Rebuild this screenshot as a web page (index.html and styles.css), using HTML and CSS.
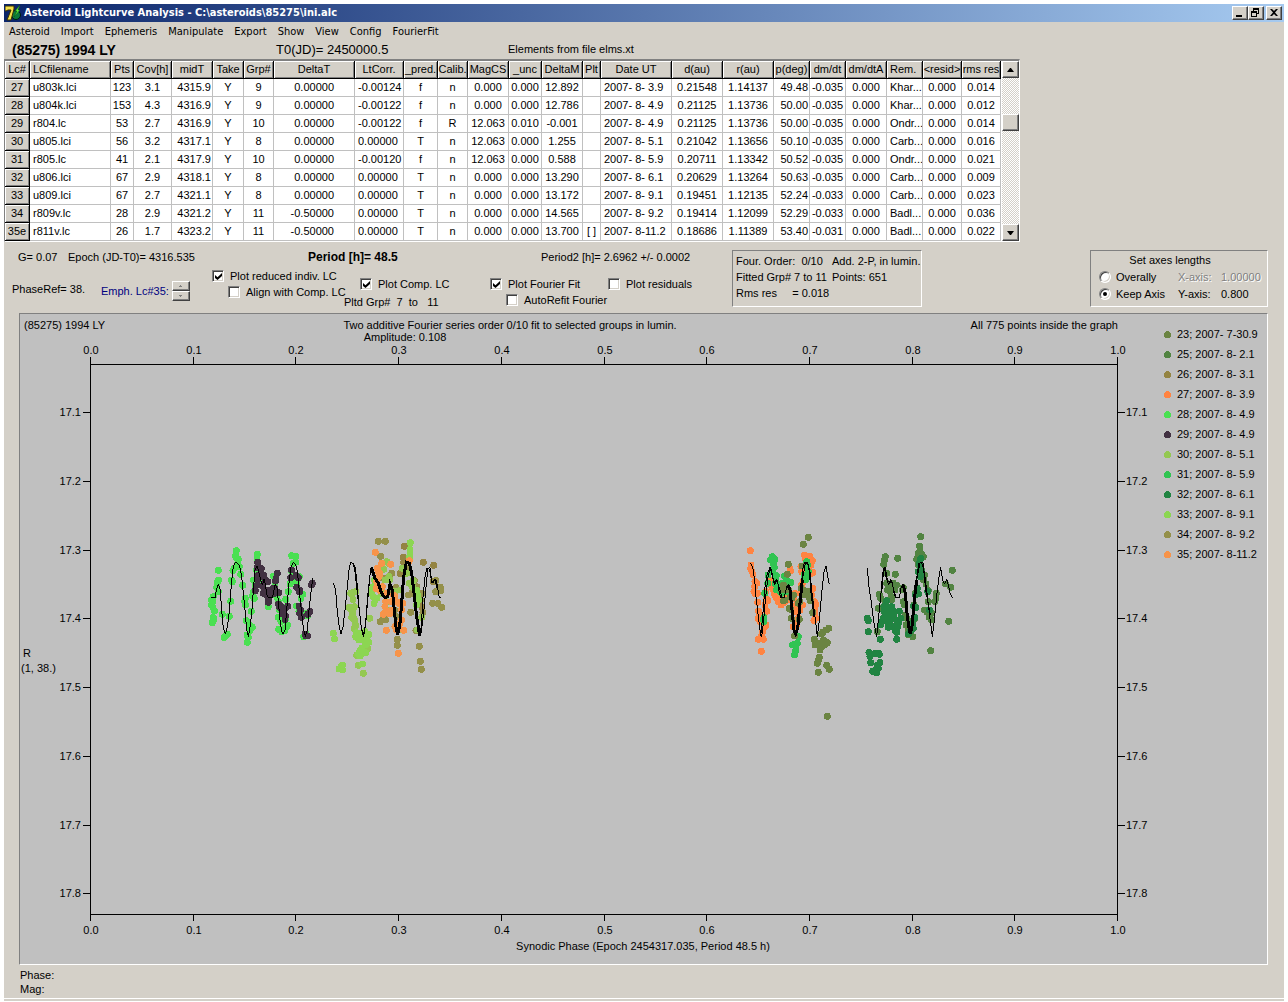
FILE: index.html
```html
<!DOCTYPE html>
<html lang="en">
<head>
    <meta charset="UTF-8">
    <meta name="viewport" content="width=device-width, initial-scale=1.0">
    <title>Asteroid Lightcurve Analysis</title>
    <link rel="stylesheet" href="styles.css">
</head>
<body>
    <div class="window">
        <header class="titlebar">
            <svg class="app-icon" width="16" height="16" viewBox="0 0 16 16">
                <circle cx="11" cy="10" r="4.5" fill="#0a7a3c" stroke="#001a10"/>
                <path d="M0 1h9v3L6 15H2L6 5H3L1 6H0z" fill="#f4e04a" stroke="#3a3000"/>
                <path d="M15 0l-5 6h2l-3 6 6-7h-2z" fill="#5af03c" stroke="#0a4a10" stroke-width=".5"/>
            </svg>
            <h1>Asteroid Lightcurve Analysis - C:\asteroids\85275\ini.alc</h1>
            <div class="window-buttons">
                <button type="button" aria-label="Minimize"><svg width="12" height="10" viewBox="0 0 12 10"><path d="M2 7h6v2H2z"/></svg></button>
                <button type="button" aria-label="Restore"><svg width="12" height="10" viewBox="0 0 12 10"><path d="M3 0h6v6H7V5h1V2H4v1H3zM1 3h6v6H1zM2 5v3h4V5z" fill-rule="evenodd"/></svg></button>
                <button type="button" aria-label="Close"><svg width="12" height="10" viewBox="0 0 12 10"><path d="M2 1h2l2 2 2-2h2L7 4.500l3 3.500H8L6 6 4 8H2l3-3.500z"/></svg></button>
            </div>
        </header>

        <nav class="menu">
            <a href="#">Asteroid</a>
            <a href="#">Import</a>
            <a href="#">Ephemeris</a>
            <a href="#">Manipulate</a>
            <a href="#">Export</a>
            <a href="#">Show</a>
            <a href="#">View</a>
            <a href="#">Config</a>
            <a href="#">FourierFit</a>
        </nav>

        <div class="object-line">
            <strong>(85275) 1994 LY</strong>
            <span class="t0">T0(JD)= 2450000.5</span>
            <span>Elements from file elms.xt</span>
        </div>

        <div class="grid-frame">
            <table>
                <colgroup id="columns"></colgroup>
                <thead>
                    <tr id="headings"></tr>
                </thead>
                <tbody id="rows">
                    <!-- Rows are filled in by script.js -->
                </tbody>
            </table>
            <div class="scrollbar">
                <button type="button" aria-label="Scroll up"><svg width="7" height="4" viewBox="0 0 7 4"><path d="M3 0h1l3 4H0z"/></svg></button>
                <div class="thumb"></div>
                <button type="button" aria-label="Scroll down"><svg width="7" height="4" viewBox="0 0 7 4"><path d="M0 0h7L4 4H3z"/></svg></button>
            </div>
        </div>

        <div class="controls">
            <div class="settings">
                <div class="values">
                    <span>G= 0.07</span>
                    <span>Epoch (JD-T0)= 4316.535</span>
                    <strong>Period [h]= 48.5</strong>
                    <span>Period2 [h]= 2.6962 +/- 0.0002</span>
                </div>
                <div class="options">
                    <div class="phase-ref">PhaseRef= 38.</div>
                    <div class="emph">
                        <span>Emph. Lc#35:</span>
                        <div class="spin">
                            <button type="button" aria-label="Next"><svg width="3" height="2" viewBox="0 0 3 2"><path d="M1 0h1v1h1v1H0V1h1z"/></svg></button>
                            <button type="button" aria-label="Previous"><svg width="3" height="2" viewBox="0 0 3 2"><path d="M0 0h3v1H2v1H1V1H0z"/></svg></button>
                        </div>
                    </div>
                    <div>
                        <label><input type="checkbox" checked> Plot reduced indiv. LC</label>
                        <label class="indent"><input type="checkbox"> Align with Comp. LC</label>
                    </div>
                    <div class="lower">
                        <label class="indent"><input type="checkbox" checked> Plot Comp. LC</label>
                        <div class="groups">Pltd Grp#&nbsp; 7 &nbsp;to &nbsp; 11</div>
                    </div>
                    <div class="lower">
                        <label><input type="checkbox" checked> Plot Fourier Fit</label>
                        <label class="indent"><input type="checkbox"> AutoRefit Fourier</label>
                    </div>
                    <div class="lower">
                        <label><input type="checkbox"> Plot residuals</label>
                    </div>
                </div>
            </div>

            <div class="panel fit-info">
                <span>Four. Order:&nbsp; 0/10</span><span>Add. 2-P, in lumin.</span>
                <span>Fitted Grp# 7 to 11</span><span>Points: 651</span>
                <span>Rms res &nbsp; &nbsp; = 0.018</span>
            </div>

            <div class="panel axes">
                <div class="axes-title">Set axes lengths</div>
                <label><input type="radio" name="axes"> Overally</label>
                <span class="disabled">X-axis:</span><span class="disabled">1.00000</span>
                <label><input type="radio" name="axes" checked> Keep Axis</label>
                <span>Y-axis:</span><span>0.800</span>
            </div>
        </div>

        <div class="panel chart">
            <svg viewBox="0 0 1247 650">
                <text x="4" y="15">(85275) 1994 LY</text>
                <text x="490" y="15" class="middle">Two additive Fourier series order 0/10 fit to selected groups in lumin.</text>
                <text x="385" y="27" class="middle">Amplitude: 0.108</text>
                <text x="1098" y="15" class="end">All 775 points inside the graph</text>
                <text x="3" y="343">R</text>
                <text x="1" y="358">(1, 38.)</text>
                <text x="623" y="636" class="middle">Synodic Phase (Epoch 2454317.035, Period 48.5 h)</text>

                <path class="axis" d="M70.500 43V607M1097.500 43V607M70 50.500H1098M70 600.500H1098"/>
                <g id="ticks"></g>
                <g id="legend"></g>

                <!-- phase 0.1 - 0.35, three units per pixel -->
                <g transform="translate(175 216) scale(.33333)">
                    <g id="left-points"></g>
                    <path class="fit" d="M48 203L60 203L64 180L70 162L75 175L80 240L85 295L91 313L95 300L101 265L107 190L113 120L118 100L123 97L130 101L135 113L140 140L145 190L150 240L155 300L160 320L164 300L170 250L175 180L180 120L187 107L192 130L197 150L202 165L207 148L212 165L214 190L220 203L232 203L236 185L241 162L246 175L250 215L255 270L260 305L264 313L270 300L276 230L282 160L288 110L295 97L302 103L307 125L311 165L320 250L326 300L331 320L337 300L343 230L350 170L353 145"/>
                    <path class="fit" d="M415 160L422 180L426 235L432 285L438 312L444 290L450 240L457 170L463 110L468 97L475 103L480 125L486 180L494 250L500 300L506 320L513 270L520 190L526 125L531 110"/>
                    <path class="fit" d="M474 99L480 112L485 145L491 220L498 285L504 316L511 290L518 200L526 125"/>
                    <path class="fit thick" d="M529 112L540 145L550 160L560 190L570 203L578 200L585 162L592 180L598 240L603 290L608 313L614 290L620 220L626 140L634 97L643 100L650 130L656 180L665 260L674 318"/>
                    <path class="fit" d="M672 318L679 290L684 200L690 140L696 115L706 113L710 160L718 150L724 150L730 185L733 203L738 203"/>
                    <path class="fit" d="M677 318L686 250L692 180L699 115L704 120L708 145L713 160L720 150L726 175"/>
                </g>

                <!-- phase 0.64 - 0.84 -->
                <g transform="translate(720 216) scale(.33333)">
                    <g id="right-points"></g>
                    <path class="fit" d="M31 98L38 110L44 150L48 200L55 260L60 300L65 320L70 280L77 200L84 140L92 112L97 135L103 165L109 148L115 165L118 190L123 203L133 203L140 170L146 162L152 180L158 250L163 300L167 313L173 295L180 220L188 120L193 97L203 98L210 125L216 190L225 260L232 320L238 270L246 180L252 125L258 108L263 140L268 163"/>
                    <path class="fit" d="M62 318L68 260L75 170L82 130L90 112L100 150L106 162L111 150L118 175L126 200"/>
                    <path class="fit thick" d="M144 165L150 180L156 240L162 300L167 311L173 295L180 220L187 150"/>
                    <path class="fit" d="M187 150L196 99L204 104L208 125L213 190L222 260"/>
                    <path class="fit" d="M382 115L387 170L395 225L402 280L410 320L415 270L422 200L428 130L433 110L438 140L446 165L452 148L458 165L462 190L468 203L478 203L484 170L490 162L496 190L502 260L508 300L511 313L516 290L523 210L532 130L537 100L545 97L553 125L560 180L568 250L577 320L583 270L591 190L597 140L602 112L608 150L613 163L620 148L625 165L630 190L637 203"/>
                    <path class="fit" d="M425 190L431 115L436 112L442 150L449 160L455 150L461 180L467 200"/>
                    <path class="fit thick" d="M490 165L496 190L502 260L508 300L511 311L516 290L523 210L530 150"/>
                    <path class="fit" d="M530 150L540 99L549 99L557 180L571 255"/>
                </g>
            </svg>
        </div>

        <footer class="readout">
            <div>Phase:</div>
            <div>Mag:</div>
        </footer>
    </div>

    <script src="script.js"></script>
</body>
</html>
```

FILE: styles.css
```css
:root {
    --face: #d4d0c8;
    --shadow: #808080;
    --dark: #404040;
    --light: #ffffff;
    --chart: #c0c0c0;
}

* {
    box-sizing: border-box;
}

body {
    margin: 4px 4px 0;
    background-color: #fff;
    color: #000;
    font-family: "Liberation Sans", Arial, sans-serif;
    font-size: 11px;
    line-height: 16px;
}

.window {
    background-color: var(--face);
    border-bottom: 2px solid var(--face);
    white-space: nowrap;
}

button {
    display: flex;
    align-items: center;
    justify-content: center;
    padding: 0;
    background-color: var(--face);
    border: 1px solid;
    border-color: var(--light) var(--dark) var(--dark) var(--light);
    box-shadow: inset -1px -1px var(--shadow);
}

/* Title bar and menu */
.titlebar {
    display: flex;
    align-items: center;
    height: 18px;
    padding: 0 2px 0 1px;
    background: linear-gradient(to right, #0a246a, #a6caf0);
    color: #fff;
}

.titlebar h1 {
    flex: 1;
    margin: 0 0 0 3px;
    font-family: "DejaVu Sans Condensed", Tahoma, sans-serif;
    font-size: 11px;
    font-weight: bold;
}

.window-buttons {
    display: flex;
}

.window-buttons button {
    width: 16px;
    height: 14px;
}

.window-buttons button:last-child {
    margin-left: 2px;
}

.menu {
    display: flex;
    gap: 11px;
    height: 19px;
    padding: 2px 5px 0;
    font-family: "DejaVu Sans Condensed", Tahoma, sans-serif;
}

.menu a {
    color: #000;
    text-decoration: none;
}

.object-line {
    display: grid;
    grid-template-columns: 264px 232px 1fr;
    height: 18px;
    padding-left: 8px;
}

.object-line strong,
.object-line .t0 {
    font-size: 14px;
    line-height: 18px;
}

.object-line .t0 {
    font-size: 13px;
}

/* Lightcurve table */
.grid-frame {
    display: flex;
    width: fit-content;
    border: 1px solid;
    border-width: 2px 1px 1px;
    border-color: var(--shadow) var(--light) var(--light) var(--shadow);
    background-color: #fff;
}

table {
    width: 996px;
    table-layout: fixed;
    border-collapse: separate;
    border-spacing: 0;
}

th,
td {
    height: 18px;
    padding: 0;
    overflow: hidden;
    border: 1px solid var(--chart);
    border-width: 0 1px 1px 0;
    font-weight: normal;
    line-height: 17px;
    text-align: center;
}

th {
    background-color: var(--face);
    border-color: #000;
    box-shadow: inset 1px 1px var(--light), inset -1px -1px var(--shadow);
}

.left {
    padding-left: 3px;
    text-align: left;
}

td.right {
    padding-right: 1px;
    text-align: right;
}

td.delta {
    padding-right: 20px;
    text-align: right;
}

.scrollbar {
    display: flex;
    flex-direction: column;
    width: 17px;
    margin-left: 1px;
    background: repeating-conic-gradient(#fff 0 25%, var(--face) 0 50%) 0 0 / 2px 2px;
}

.scrollbar button {
    height: 17px;
}

.thumb {
    height: 17px;
    margin: 36px 0 auto;
    background-color: var(--face);
    border: 1px solid;
    border-color: var(--light) var(--dark) var(--dark) var(--light);
    box-shadow: inset -1px -1px var(--shadow);
}

/* Controls between the table and the chart */
.controls {
    display: flex;
    height: 71px;
    padding: 8px 16px 0 0;
}

.settings {
    width: 728px;
}

.values {
    display: grid;
    grid-template-columns: 50px 240px 233px 1fr;
    padding-left: 14px;
    line-height: 14px;
}

.values strong {
    font-size: 12px;
}

.options {
    display: grid;
    grid-template-columns: 89px 111px 132px 146px 118px 1fr;
    padding: 4px 0 0 8px;
}

.phase-ref {
    padding-top: 13px;
}

.emph {
    display: flex;
    align-items: center;
    gap: 3px;
    height: 20px;
    margin-top: 13px;
    color: #000080;
}

.spin button {
    width: 18px;
    height: 10px;
}

.spin path {
    fill: var(--shadow);
}

label {
    display: flex;
    align-items: center;
    gap: 6px;
    height: 16px;
}

.indent {
    margin-left: 16px;
}

.lower {
    padding-top: 8px;
}

.groups {
    padding-top: 2px;
}

input {
    appearance: none;
    flex: none;
    width: 12px;
    height: 12px;
    margin: 0;
    background-color: #fff;
    border: 1px solid;
    border-color: var(--shadow) var(--light) var(--light) var(--shadow);
    box-shadow: inset 1px 1px var(--dark), inset -1px -1px var(--face);
}

input[type="checkbox"]:checked::before {
    content: "";
    display: block;
    width: 7px;
    height: 7px;
    margin: 2px 0 0 2px;
    background-color: #000;
    clip-path: polygon(0 29%, 36% 60%, 100% 0, 100% 43%, 36% 100%, 0 72%);
}

input[type="radio"] {
    border-radius: 50%;
}

input[type="radio"]:checked::before {
    content: "";
    display: block;
    width: 4px;
    height: 4px;
    margin: 3px;
    border-radius: 50%;
    background-color: #000;
}

.panel {
    border: 1px solid;
    border-color: var(--shadow) var(--light) var(--light) var(--shadow);
}

.fit-info {
    display: grid;
    grid-template-columns: 96px 1fr;
    align-content: start;
    width: 190px;
    height: 57px;
    padding: 2px 0 0 3px;
}

.axes {
    display: grid;
    grid-template-columns: 79px 43px 1fr;
    grid-auto-rows: 17px;
    align-items: center;
    width: 178px;
    height: 57px;
    margin-left: auto;
    padding-left: 8px;
}

.axes label {
    gap: 5px;
}

.axes-title {
    grid-column: 1 / -1;
    padding-right: 26px;
    text-align: center;
}

.disabled {
    color: var(--shadow);
    text-shadow: 1px 1px var(--light);
}

/* Chart */
.chart {
    margin: 0 16px 0 15px;
    background-color: var(--chart);
}

.chart svg {
    display: block;
    width: 100%;
    shape-rendering: crispEdges;
}

.chart text {
    font-size: 11px;
}

.middle {
    text-anchor: middle;
}

.end {
    text-anchor: end;
}

.axis {
    fill: none;
    stroke: #000;
}

.points {
    fill: none;
    stroke-width: 21;
    stroke-linecap: round;
}

.fit {
    fill: none;
    stroke: #000;
    stroke-width: 3;
}

.thick {
    stroke-width: 9;
}

.readout {
    padding: 3px 16px 2px;
    border-bottom: 1px solid var(--light);
    line-height: 14px;
}
```

FILE: script.js
```js
// [heading, width, cell class]
const columns = [
    ['Lc#', 25, ''],
    ['LCfilename', 81, 'left'],
    ['Pts', 23, ''],
    ['Cov[h]', 38, ''],
    ['midT', 41, 'right'],
    ['Take', 31, ''],
    ['Grp#', 30, ''],
    ['DeltaT', 81, 'delta'],
    ['LtCorr.', 49, 'left'],
    ['_pred.', 34, ''],
    ['Calib.', 30, ''],
    ['MagCS', 41, ''],
    ['_unc', 33, ''],
    ['DeltaM', 41, ''],
    ['Plt', 18, ''],
    ['Date UT', 71, 'left'],
    ['d(au)', 51, ''],
    ['r(au)', 51, ''],
    ['p(deg)', 36, 'right'],
    ['dm/dt', 36, ''],
    ['dm/dtA', 41, ''],
    ['Rem.', 36, 'left'],
    ['<resid>', 39, ''],
    ['rms res', 39, '']
];

const rows = [
    '27|u803k.lci|123|3.1|4315.9|Y|9|0.00000|-0.00124|f|n|0.000|0.000|12.892||2007- 8- 3.9|0.21548|1.14137|49.48|-0.035|0.000|Khar...|0.000|0.014',
    '28|u804k.lci|153|4.3|4316.9|Y|9|0.00000|-0.00122|f|n|0.000|0.000|12.786||2007- 8- 4.9|0.21125|1.13736|50.00|-0.035|0.000|Khar...|0.000|0.012',
    '29|r804.lc|53|2.7|4316.9|Y|10|0.00000|-0.00122|f|R|12.063|0.010|-0.001||2007- 8- 4.9|0.21125|1.13736|50.00|-0.035|0.000|Ondr...|0.000|0.014',
    '30|u805.lci|56|3.2|4317.1|Y|8|0.00000|0.00000|T|n|12.063|0.000|1.255||2007- 8- 5.1|0.21042|1.13656|50.10|-0.035|0.000|Carb...|0.000|0.016',
    '31|r805.lc|41|2.1|4317.9|Y|10|0.00000|-0.00120|f|n|12.063|0.000|0.588||2007- 8- 5.9|0.20711|1.13342|50.52|-0.035|0.000|Ondr...|0.000|0.021',
    '32|u806.lci|67|2.9|4318.1|Y|8|0.00000|0.00000|T|n|0.000|0.000|13.290||2007- 8- 6.1|0.20629|1.13264|50.63|-0.035|0.000|Carb...|0.000|0.009',
    '33|u809.lci|67|2.7|4321.1|Y|8|0.00000|0.00000|T|n|0.000|0.000|13.172||2007- 8- 9.1|0.19451|1.12135|52.24|-0.033|0.000|Carb...|0.000|0.023',
    '34|r809v.lc|28|2.9|4321.2|Y|11|-0.50000|0.00000|T|n|0.000|0.000|14.565||2007- 8- 9.2|0.19414|1.12099|52.29|-0.033|0.000|Badl...|0.000|0.036',
    '35e|r811v.lc|26|1.7|4323.2|Y|11|-0.50000|0.00000|T|n|0.000|0.000|13.700|[ ]|2007- 8-11.2|0.18686|1.11389|53.40|-0.031|0.000|Badl...|0.000|0.022'
];

const curves = [
    ['23; 2007- 7-30.9', '#6b8442'],
    ['25; 2007- 8- 2.1', '#528442'],
    ['26; 2007- 8- 3.1', '#948442'],
    ['27; 2007- 8- 3.9', '#ff8442'],
    ['28; 2007- 8- 4.9', '#4ae052'],
    ['29; 2007- 8- 4.9', '#423142'],
    ['30; 2007- 8- 5.1', '#94c852'],
    ['31; 2007- 8- 5.9', '#31c452'],
    ['32; 2007- 8- 6.1', '#218442'],
    ['33; 2007- 8- 9.1', '#8cd652'],
    ['34; 2007- 8- 9.2', '#94904a'],
    ['35; 2007- 8-11.2', '#f7944a']
];

// Measured points, drawn in this order
const leftPoints = [
    ['28', '70,121 70,150 67,158 65,172 70,185 55,200 50,210 53,215 50,225 54,232 58,243 54,262 57,267 52,278 82,253 103,259 107,214 97,313 87,322 92,318 112,155 110,150 114,122 118,115 125,85 124,62 122,78 130,88 128,100 133,110 137,133 143,166 151,205 149,215 151,225 169,244 154,272 164,285 172,292 165,302 156,315 160,322 157,337 187,73 186,88 184,120 175,150 180,165 172,198 178,205 176,185 198,130 206,148 200,162 193,118 217,155 220,230 215,195 235,138 240,160 240,185 250,215 245,200 253,240 250,262 258,275 251,298 260,305 270,302 276,290 278,285 267,295 272,208 275,230 272,265 280,185 285,162 290,77 302,79 302,97 295,100 290,125 298,140 305,158 313,140 298,155 323,193 318,205 305,228 312,245 320,250 338,258 334,250 326,320 333,312'],
    ['29', '188,97 187,113 199,116 205,135 210,150 205,142 190,135 188,150 187,165 181,182 218,155 204,170 210,180 214,190 205,190 225,185 228,180 232,190 218,200 222,205 220,217 235,175 240,175 247,130 243,145 241,153 251,188 236,192 250,222 256,228 260,238 253,230 265,240 272,258 262,252 270,268 265,245 278,229 270,235 289,120 287,143 303,137 310,143 305,172 313,186 312,228 316,240 314,250 319,262 345,245 338,253 350,165 352,160 333,318 330,312 337,318 313,180'],
    ['26', '628,49 685,97 716,106 625,82 626,98 625,115 715,155 680,230 605,285 615,130'],
    ['34', '550,34 571,34 557,79 590,130 565,145 603,172 589,180 640,115 658,152 665,170 680,190 676,210 684,248 647,247 572,270 570,262 556,275 565,268 607,328 607,346 663,302 673,349 676,394 679,418 640,195 650,190 598,240 605,260 723,152 736,172 738,182 722,185 713,220 729,220 740,232'],
    ['30', '467,190 472,188 482,185 474,208 465,235 463,232 478,230 474,240 470,262 473,250 477,265 479,272 482,286 478,296 519,355 485,376 490,406 505,430 524,265 575,95 584,102 566,118 582,140 585,148 570,150 560,175 575,215 560,190 580,240 600,185 622,115 635,130 655,152 653,172 680,262 668,300 643,160 617,180 610,300'],
    ['33', '415,310 418,327 432,417 440,407 443,420 435,415 443,405 484,308 488,323 492,330 482,320 500,310 510,305 517,318 521,313 521,337 515,330 505,325 498,330 512,345 505,365 495,362 490,372 495,378 500,372 512,368 502,402 500,355 530,190 535,200 540,210 537,220 528,180 545,205 535,170 538,150 545,165 646,38 645,58 645,72 643,82 665,180 668,195 670,210 665,225'],
    ['35', '541,67 560,100 587,103 547,115 550,125 555,132 552,140 545,155 543,175 555,182 572,215 570,230 565,253 572,245 580,250 590,240 575,190 574,301 605,215 612,220 623,220 620,240 620,270 615,280 600,290 605,300 626,301 610,370 643,92 600,200 590,215 562,170 585,250 595,195']
];

const rightPoints = [
    ['27', '31,62 33,105 32,115 36,125 39,133 45,155 50,160 44,170 42,185 45,190 52,190 53,217 55,243 58,250 55,265 60,275 78,285 74,290 68,305 60,325 55,328 65,318 70,328 64,364 80,244 78,205 84,212 75,225 72,262 78,185 90,160 88,150 92,165 95,170 100,180 105,195 110,205 103,190 115,215 123,225 128,220 120,205 135,215 140,210 130,195 150,115 152,123 145,200 155,195 165,190 150,210 160,205 158,235 163,245 170,225 172,245 175,265 180,240 187,225 168,275 160,290 170,285 183,190 185,165 190,155 193,75 195,85 210,80 207,80 212,90 217,92 213,105 214,130 219,128 205,120 183,110 185,125 219,175 215,195 223,215 228,223 225,240 227,265 225,258 222,272'],
    ['31', '97,80 92,90 97,88 104,88 100,100 103,112 98,125 109,137 84,135 83,160 74,190 105,160 115,170 120,185 110,180 108,150 125,190 127,160 134,138 140,150 145,155 153,157 138,185 72,262 70,268 72,275 175,320 163,342 172,340 168,345 158,345 167,362 163,375 165,372 200,95 198,110 202,105 197,140 197,148 195,150 192,135 205,125'],
    ['23', '205,22 190,43 145,103 142,133 130,165 124,180 133,178 130,213 135,210 145,180 152,200 160,195 155,205 147,235 152,238 154,265 178,268 180,215 175,220 184,175 190,180 200,185 190,195 186,108 206,185 209,205 211,212 218,248 163,318 223,328 228,340 225,345 240,340 250,330 262,338 245,350 240,360 238,345 253,345 238,382 235,390 232,400 235,427 260,406 268,418 266,295 258,300 248,307 245,312 262,559'],
    ['25', '542,20 538,48 540,60 535,70 545,72 530,88 550,80 536,105 436,80 433,90 431,103 440,130 473,85 466,133 418,193 422,205 415,235 412,305 440,160 450,165 458,170 450,185 455,200 470,165 460,160 465,180 442,180 435,215 455,210 490,173 487,180 490,215 494,225 495,255 500,265 498,285 505,300 505,315 518,320 512,290 525,265 520,270 522,225 525,190 540,140 545,120 553,135 558,162 565,182 550,150 553,240 560,245 568,262 575,270 572,362 575,250 589,190 588,205 585,215 565,215 617,162 632,172 637,121 626,274'],
    ['32', '382,265 385,272 385,305 421,328 470,328 387,368 415,370 405,370 390,380 392,398 418,373 420,398 412,405 415,415 398,424 410,428 404,422 440,212 437,225 432,230 445,235 455,230 458,240 432,245 440,250 450,255 460,255 430,265 425,275 422,285 435,268 445,280 450,270 445,292 460,262 470,270 475,280 472,292 465,300 470,307 460,290 478,244 482,265 455,255 543,85 540,90 537,100 543,110 540,120 535,125 545,125 541,140 545,130 536,192 532,175 527,195 528,232 520,228 525,262 518,280 520,295 515,300 505,312 510,305 563,185 568,240']
];

const xTicks = [70, 173, 275, 378, 481, 584, 686, 789, 892, 994, 1097];
const yTicks = [98, 167, 236, 304, 373, 442, 511, 579];

function escapeText(text) {
    return text.replace(/</g, '&lt;').replace(/>/g, '&gt;');
}

function fillTable() {
    document.getElementById('columns').innerHTML =
        columns.map(c => `<col style="width: ${c[1]}px">`).join('');

    document.getElementById('headings').innerHTML = columns.map(c => {
        const left = c[0] === 'LCfilename' || c[0] === 'Rem.' ? ' class="left"' : '';
        return `<th scope="col"${left}>${escapeText(c[0])}</th>`;
    }).join('');

    document.getElementById('rows').innerHTML = rows.map(row => {
        const cells = row.split('|').map((value, i) =>
            i === 0 ? `<th scope="row">${value}</th>` : `<td class="${columns[i][2]}">${value}</td>`);
        return `<tr>${cells.join('')}</tr>`;
    }).join('');
}

function drawTicks() {
    let out = '';
    xTicks.forEach((x, i) => {
        const label = (i / 10).toFixed(1);
        out += `<path class="axis" d="M${x + 0.5} 43v7M${x + 0.5} 600v7"/>`;
        out += `<text class="middle" x="${x + 1}" y="40">${label}</text>`;
        out += `<text class="middle" x="${x + 1}" y="620">${label}</text>`;
    });
    yTicks.forEach((y, i) => {
        const label = (17.1 + i / 10).toFixed(1);
        out += `<path class="axis" d="M63 ${y + 0.5}h7M1098 ${y + 0.5}h7"/>`;
        out += `<text class="end" x="61" y="${y + 4}">${label}</text>`;
        out += `<text x="1106" y="${y + 4}">${label}</text>`;
    });
    document.getElementById('ticks').innerHTML = out;
}

function drawLegend() {
    document.getElementById('legend').innerHTML = curves.map((c, i) =>
        `<circle cx="1147.5" cy="${20.5 + i * 20}" r="3.5" fill="${c[1]}"/>` +
        `<text x="1157" y="${24 + i * 20}">${c[0]}</text>`).join('');
}

function drawPoints(id, sets) {
    document.getElementById(id).innerHTML = sets.map(([curve, points]) => {
        const color = curves.find(c => c[0].startsWith(curve))[1];
        const d = points.split(' ').map(p => `M${p}h0`).join('');
        return `<path class="points" stroke="${color}" d="${d}"/>`;
    }).join('');
}

fillTable();
drawTicks();
drawLegend();
drawPoints('left-points', leftPoints);
drawPoints('right-points', rightPoints);
```
